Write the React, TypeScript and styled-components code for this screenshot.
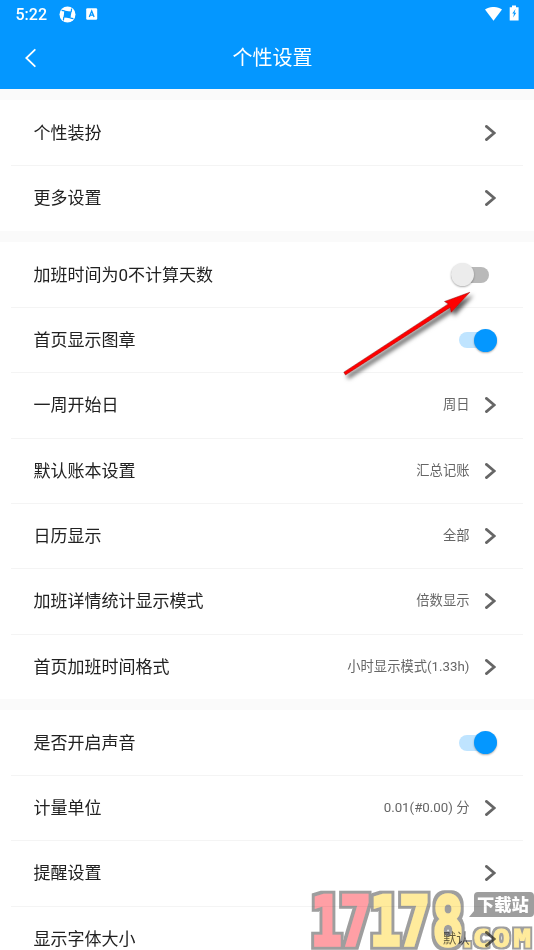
import React from "react";
import styled, { createGlobalStyle } from "styled-components";

const GlobalStyle = createGlobalStyle`
  * { box-sizing: border-box; }
  body { margin: 0; overflow: hidden; background: #fafafa; }
`;

const Screen = styled.div`
  position: relative;
  width: 534px;
  height: 950px;
  overflow: hidden;
  background: #fafafa;
  color: #212121;
  font-family: Roboto, "Noto Sans CJK SC", sans-serif;
`;

const Header = styled.header`
  height: 89px;
  background: #0497ff;
  color: #fff;
`;

const StatusBar = styled.div`
  display: flex;
  align-items: center;
  height: 28px;
  padding: 0 14px 0 15.5px;
`;

const Clock = styled.span`
  width: 43px;
  padding-top: 1px;
  font-size: 16px;
  font-weight: 500;
  line-height: 28px;
`;

const StatusIcon = styled.svg<{ $gap?: number }>`
  display: block;
  flex: none;
  margin-left: ${(p) => p.$gap ?? 0}px;
`;

const Spacer = styled.div`
  flex: 1;
`;

const TitleBar = styled.div`
  display: grid;
  grid-template-columns: 60px 1fr 49px;
  align-items: center;
  height: 60px;
  svg { display: block; margin-left: 24px; }
`;

const Title = styled.h1`
  margin: 0;
  font-size: 20px;
  font-weight: 400;
  line-height: 28px;
  text-align: center;
`;

const Section = styled.section<{ $height: number }>`
  height: ${(p) => p.$height}px;
  margin-top: 11px;
  padding-top: 0.6px;
  background: #fff;
`;

const Row = styled.div`
  display: flex;
  align-items: center;
  height: 65.33px;
  margin: 0 11px;
  padding: 0 26px 0 22.5px;
  border-bottom: 1px solid #f4f4f4;
  &:last-child { border-bottom-color: transparent; }
`;

const Label = styled.span`
  flex: 1;
  font-size: 17px;
  line-height: 24px;
  white-space: nowrap;
`;

const Value = styled.span`
  margin-right: 15.5px;
  color: #666;
  font-size: 13.3px;
  line-height: 20px;
  white-space: nowrap;
`;

const Chevron = styled.svg`
  display: block;
  margin-right: 1px;
`;

const Toggle = styled.div<{ $on: boolean }>`
  display: flex;
  align-items: center;
  justify-content: ${(p) => (p.$on ? "flex-end" : "flex-start")};
  width: 38px;
  height: 16px;
  margin-right: ${(p) => (p.$on ? 0 : 8)}px;
  border-radius: 8px;
  background: ${(p) => (p.$on ? "#bfe4ff" : "#b9b9b9")};
`;

const Knob = styled.div<{ $on: boolean }>`
  flex: none;
  width: 23px;
  height: 23px;
  border-radius: 50%;
  background: ${(p) => (p.$on ? "#0497ff" : "#ececec")};
  box-shadow: 0 1px 2px rgba(0, 0, 0, 0.32);
`;

const Pointer = styled.svg`
  position: absolute;
  left: 334px;
  top: 282px;
`;

const Watermark = styled.svg`
  position: absolute;
  left: 306px;
  top: 884px;
  mix-blend-mode: multiply;
  text {
    font-family: "DejaVu Sans Mono", monospace;
    font-weight: 700;
    stroke-linejoin: miter;
  }
  .red { fill: #ff9fa5; stroke: #ff9fa5; }
  .yellow { fill: #ffeb9c; stroke: #ffeb9c; }
  .caption {
    font-family: "Noto Sans CJK SC", sans-serif;
    font-weight: 900;
    stroke: none;
  }
`;

type Item = { label: string; value?: string; on?: boolean };

const sections: { height: number; items: Item[] }[] = [
  { height: 131, items: [{ label: "个性装扮" }, { label: "更多设置" }] },
  {
    height: 457,
    items: [
      { label: "加班时间为0不计算天数", on: false },
      { label: "首页显示图章", on: true },
      { label: "一周开始日", value: "周日" },
      { label: "默认账本设置", value: "汇总记账" },
      { label: "日历显示", value: "全部" },
      { label: "加班详情统计显示模式", value: "倍数显示" },
      { label: "首页加班时间格式", value: "小时显示模式(1.33h)" },
    ],
  },
  {
    height: 262,
    items: [
      { label: "是否开启声音", on: true },
      { label: "计量单位", value: "0.01(#0.00) 分" },
      { label: "提醒设置" },
      { label: "显示字体大小", value: "默认" },
    ],
  },
];

function SettingRow({ label, value, on }: Item) {
  return (
    <Row>
      <Label>{label}</Label>
      {value && <Value>{value}</Value>}
      {on !== undefined ? (
        <Toggle $on={on}>
          <Knob $on={on} />
        </Toggle>
      ) : (
        <Chevron width="11" height="16" viewBox="0 0 11 16">
          <path d="M1.4 1.4 9.2 8 1.4 14.6" fill="none" stroke="#666" strokeWidth="2.7" strokeLinecap="round" />
        </Chevron>
      )}
    </Row>
  );
}

export default function App() {
  return (
    <Screen>
      <GlobalStyle />
      <Header>
        <StatusBar>
          <Clock>5:22</Clock>
          <StatusIcon width="17" height="17" viewBox="0 0 17 17">
            <circle cx="8.5" cy="8.5" r="8" fill="#fff" />
            <path d="M5.2 4.6 9.4 5.2 12.6 5.6 11.8 9.4 11.6 12.6 7.8 11.8 4.4 11.4 5 8Z" fill="#0497ff" />
            <path d="M5.6 4.8 2.6 4.4M12.2 6 12.6 2.6M11.4 12.2 14.4 12.6M4.8 11 4.4 14.4" stroke="#0497ff" strokeWidth="1.2" />
          </StatusIcon>
          <StatusIcon $gap={10} width="12" height="12" viewBox="0 0 12 12">
            <rect x=".2" y=".2" width="11" height="11.6" rx="1.2" fill="#fff" />
            <path d="M3.3 9 5.7 3 8.1 9M4.2 7.1H7.2" fill="none" stroke="#0497ff" strokeWidth="1.3" />
          </StatusIcon>
          <Spacer />
          <StatusIcon width="17" height="14" viewBox="0 0 17 14">
            <path d="M0 2.6C4.9-.9 12.1-.9 17 2.6L8.5 13.7Z" fill="#fff" />
          </StatusIcon>
          <StatusIcon $gap={7} width="11" height="18" viewBox="0 0 11 18">
            <path d="M1 2.3H3V.5H7V2.3H9.6V15.5H.7V2.3Z" fill="#fff" />
            <path d="M6.5 4 3.3 8.5H5L4.2 12.5 7.2 7.8H5.5Z" fill="#0497ff" />
          </StatusIcon>
        </StatusBar>
        <TitleBar>
          <svg width="13" height="20" viewBox="0 0 13 20">
            <path d="M10.8 1.8 2.3 10 10.8 18.2" fill="none" stroke="#fff" strokeWidth="1.8" strokeLinecap="round" />
          </svg>
          <Title>个性设置</Title>
        </TitleBar>
      </Header>
      {sections.map((section) => (
        <Section key={section.height} $height={section.height}>
          {section.items.map((item) => (
            <SettingRow key={item.label} {...item} />
          ))}
        </Section>
      ))}
      <Pointer width="150" height="110" viewBox="334 282 150 110">
        <defs>
          <filter id="drop" x="-20%" y="-20%" width="150%" height="150%">
            <feDropShadow dx="3" dy="3.5" stdDeviation="2" floodColor="#000" floodOpacity=".65" />
          </filter>
        </defs>
        <g filter="url(#drop)" fill="#f00" stroke="#8a1a1a" strokeWidth=".5">
          <path d="M343.8 372.2 448.3 303.9 444.5 301.5 469.8 292.3 451.3 312.2 450.2 307.4 345.5 375Z" />
        </g>
      </Pointer>
      <Watermark width="228" height="66" viewBox="306 884 228 66">
        <defs>
          <filter id="rim" filterUnits="userSpaceOnUse" x="300" y="880" width="240" height="80">
            <feMorphology in="SourceAlpha" operator="dilate" radius="3" result="wide" />
            <feFlood floodColor="#9e9e9e" />
            <feComposite in2="wide" operator="in" result="edge" />
            <feMerge>
              <feMergeNode in="edge" />
              <feMergeNode in="SourceGraphic" />
            </feMerge>
          </filter>
          <filter id="thin-rim" filterUnits="userSpaceOnUse" x="300" y="880" width="240" height="80">
            <feMorphology in="SourceAlpha" operator="dilate" radius="2" result="wide" />
            <feFlood floodColor="#9e9e9e" />
            <feComposite in2="wide" operator="in" result="edge" />
            <feMerge>
              <feMergeNode in="edge" />
              <feMergeNode in="SourceGraphic" />
            </feMerge>
          </filter>
        </defs>
        <g filter="url(#rim)">
          <g transform="translate(308.5 944.5) scale(.76 1)" fontSize="68" strokeWidth="3.4">
            <text className="red" x="3 41.5" y="0">17</text>
            <text className="yellow" x="80.5 119 163" y="0">178</text>
          </g>
        </g>
        <g filter="url(#thin-rim)">
          <text
            className="yellow"
            transform="translate(0 946.5) scale(1.15 1)"
            x="399 411.2 428.5 446.5"
            y="0"
            fontSize="25"
            strokeWidth="1"
          >.COM</text>
        </g>
        <path d="M478 892H530Q534 892 534 896V913Q534 917 530 917H469L474 911V896Q474 892 478 892Z" fill="#9e9e9e" />
        <text className="caption" x="477" y="911" fontSize="17.3" fill="#fff">下载站</text>
      </Watermark>
    </Screen>
  );
}
